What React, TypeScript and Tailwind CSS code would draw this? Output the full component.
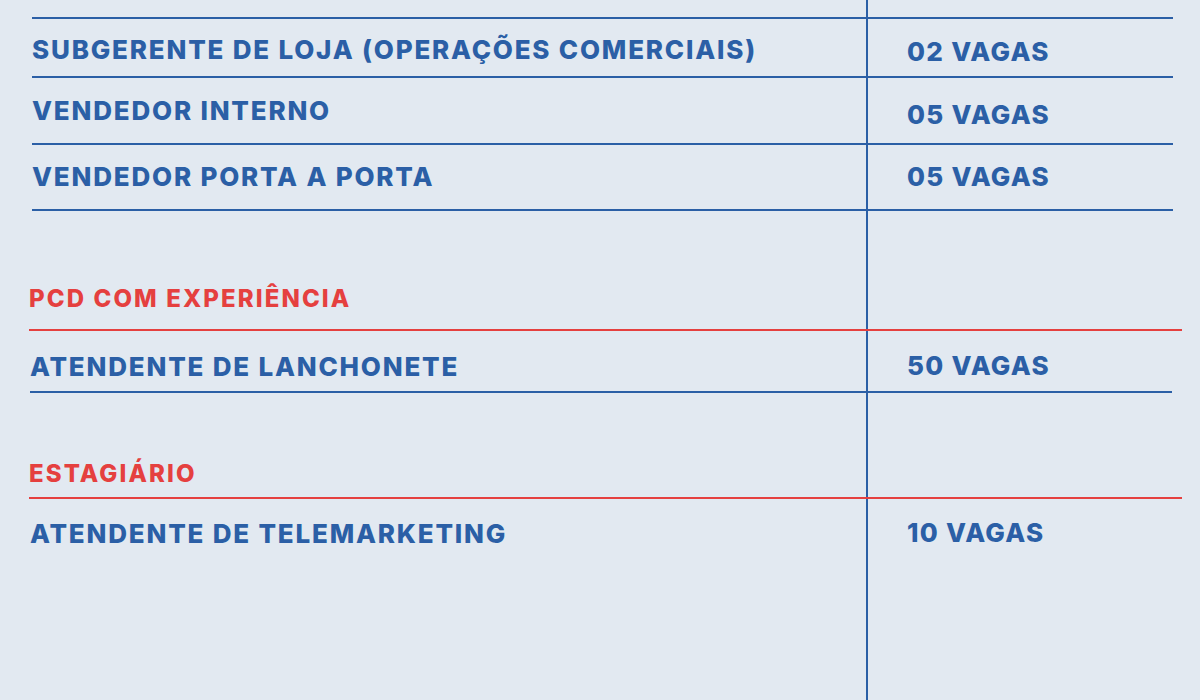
const BLUE = "border-[#2b5fa6]";

function Row({
  left,
  right,
  startClass,
  leftWidth,
  ptLeft,
  ptRight,
  height,
  bottom,
}: {
  left?: string;
  right?: string;
  startClass: string;
  leftWidth: string;
  ptLeft: string;
  ptRight: string;
  height: string;
  bottom: string;
}) {
  return (
    <div className={`flex ${startClass} ${height} ${bottom}`}>
      <div className={`${leftWidth} ${ptLeft} shrink-0`}>
        {left && (
          <p className="text-[26px] leading-none font-extrabold text-[#2b5fa6] tracking-[1.8px] whitespace-nowrap">{left}</p>
        )}
      </div>
      <div className={`flex-1 border-l-2 ${BLUE} pl-[39px] ${ptRight}`}>
        {right && (
          <p className="text-[26px] leading-none font-extrabold text-[#2b5fa6] tracking-[1.3px] whitespace-nowrap">{right}</p>
        )}
      </div>
    </div>
  );
}

function Heading({ label, height, pt }: { label: string; height: string; pt: string }) {
  return (
    <div className={`flex ml-[29px] mr-[18px] ${height} border-b-2 border-[#e5403f]`}>
      <div className={`w-[837px] shrink-0 ${pt}`}>
        <p className="text-[24px] leading-none font-extrabold text-[#e5403f] tracking-[2.1px] whitespace-nowrap">{label}</p>
      </div>
      <div className={`flex-1 border-l-2 ${BLUE}`} />
    </div>
  );
}

export default function App() {
  return (
    <div
      className="w-[1200px] h-[700px] bg-[#e2e9f1] flex flex-col overflow-hidden"
      style={{ fontFamily: "Inter, 'Liberation Sans', sans-serif" }}
    >
      {/* top stub of the column divider */}
      <div className="flex ml-[32px] mr-[27px] h-[17px]">
        <div className="w-[834px] shrink-0" />
        <div className={`flex-1 border-l-2 ${BLUE}`} />
      </div>

      <div className={`ml-[32px] mr-[27px] border-t-2 ${BLUE}`} />
      <Row
        left="SUBGERENTE DE LOJA (OPERAÇÕES COMERCIAIS)"
        right="02 VAGAS"
        startClass="ml-[32px] mr-[27px]"
        leftWidth="w-[834px]"
        ptLeft="pt-[18px]"
        ptRight="pt-[20px]"
        height="h-[59px]"
        bottom={`border-b-2 ${BLUE}`}
      />
      <Row
        left="VENDEDOR INTERNO"
        right="05 VAGAS"
        startClass="ml-[32px] mr-[27px]"
        leftWidth="w-[834px]"
        ptLeft="pt-[20px]"
        ptRight="pt-[24px]"
        height="h-[67px]"
        bottom={`border-b-2 ${BLUE}`}
      />
      <Row
        left="VENDEDOR PORTA A PORTA"
        right="05 VAGAS"
        startClass="ml-[32px] mr-[27px]"
        leftWidth="w-[834px]"
        ptLeft="pt-[19px]"
        ptRight="pt-[19px]"
        height="h-[66px]"
        bottom={`border-b-2 ${BLUE}`}
      />

      <Heading label="PCD COM EXPERIÊNCIA" height="h-[120px]" pt="pt-[76px]" />
      <Row
        left="ATENDENTE DE LANCHONETE"
        right="50 VAGAS"
        startClass="ml-[30px] mr-[28px]"
        leftWidth="w-[836px]"
        ptLeft="pt-[23px]"
        ptRight="pt-[22px]"
        height="h-[62px]"
        bottom={`border-b-2 ${BLUE}`}
      />

      <Heading label="ESTAGIÁRIO" height="h-[106px]" pt="pt-[69px]" />
      <Row
        left="ATENDENTE DE TELEMARKETING"
        right="10 VAGAS"
        startClass="ml-[30px] mr-[28px]"
        leftWidth="w-[836px]"
        ptLeft="pt-[22px]"
        ptRight="pt-[21px]"
        height="flex-1"
        bottom=""
      />
    </div>
  );
}
